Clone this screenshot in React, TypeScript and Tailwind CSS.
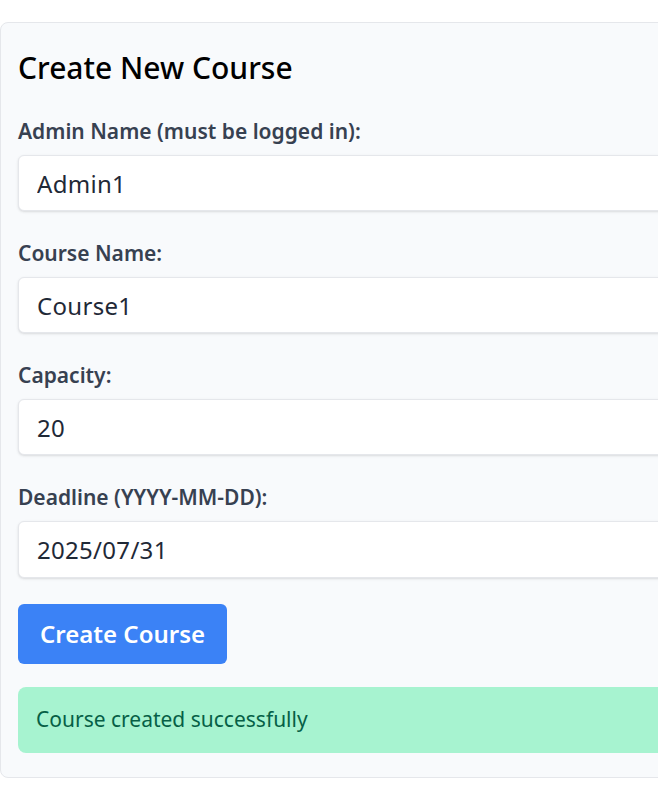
import React from "react";

const fields = [
    { label: "Admin Name (must be logged in):", value: "Admin1", h: "h-[56px]" },
    { label: "Course Name:", value: "Course1", h: "h-[56px]" },
    { label: "Capacity:", value: "20", h: "h-[56px]" },
    { label: "Deadline (YYYY-MM-DD):", value: "2025/07/31", h: "h-[57px]" },
];

const App = () => {
    return (
        <div className="w-[658px] h-[804px] overflow-hidden bg-white font-['Noto_Sans',sans-serif]">
            <div className="pt-[22px]">
                <div className="w-[760px] bg-[#f8fafc] border border-[#e5e7eb] rounded-lg px-[17px] pt-[24px] pb-[24px]">
                    <h2 className="text-[30px] font-medium text-black leading-[42px] mb-[26px]">Create New Course</h2>
                    {fields.map((f) => (
                        <div key={f.label} className="mb-[26px] last:mb-[25px]">
                            <label className="block text-[21px] font-semibold text-[#374151] leading-[32px] mb-[8px]">{f.label}</label>
                            <input
                                readOnly
                                value={f.value}
                                className={`w-full ${f.h} px-[18px] bg-white border border-[#e5e7eb] rounded-md shadow-sm text-[24px] tracking-[0.3px] text-[#1f2937] outline-none`}
                            />
                        </div>
                    ))}
                    <button className="h-[60px] px-[22px] bg-[#3b82f6] text-white text-[24px] font-semibold rounded-md">
                        Create Course
                    </button>
                    <div className="mt-[23px] h-[66px] flex items-center px-[18px] bg-[#a7f3d0] rounded-lg text-[21px] text-[#065f46]">
                        Course created successfully
                    </div>
                </div>
            </div>
        </div>
    );
};

export default App;
